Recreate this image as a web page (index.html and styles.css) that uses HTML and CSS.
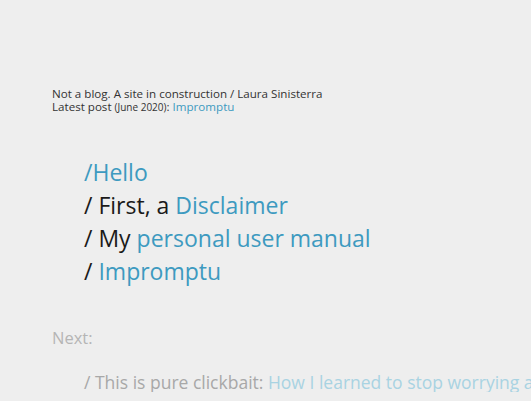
FILE: index.html
```html
<!DOCTYPE html>
<html>
<head>
<meta charset="utf-8">
<link rel="stylesheet" href="styles.css">
</head>
<body>
<main class="page">
  <header class="intro">
    <p class="line">Not a blog. A site in construction / Laura Sinisterra</p>
    <p class="line">Latest post <span class="date">(June 2020)</span>: <a class="link" href="#">Impromptu</a></p>
  </header>
  <nav class="toc">
    <p class="item"><a class="link" href="#">/Hello</a></p>
    <p class="item">/ First, a <a class="link" href="#">Disclaimer</a></p>
    <p class="item">/ My <a class="link" href="#">personal user manual</a></p>
    <p class="item">/ <a class="link" href="#">Impromptu</a></p>
  </nav>
  <section class="next">
    <p class="next-label">Next:</p>
    <p class="next-item">/ This is pure clickbait: <a class="link faded" href="#">How I learned to stop worrying a</a></p>
  </section>
</main>
</body>
</html>
```
FILE: styles.css
```css
html, body {
  margin: 0;
  padding: 0;
  background: #eeeeee;
  overflow: hidden;
}
body {
  font-family: "Open Sans", "Noto Sans", sans-serif;
  color: #333;
}
.page {
  padding: 87px 0 0 52px;
  white-space: nowrap;
}
.intro {
  display: flex;
  flex-direction: column;
}
.line {
  margin: 0;
  font-size: 11.6px;
  line-height: 13px;
  color: #333;
}
.date {
  font-size: 10px;
}
.link {
  color: #3d9ac0;
  text-decoration: none;
}
.toc {
  margin-top: 42px;
  padding-left: 32px;
}
.item {
  margin: 0;
  font-size: 23px;
  line-height: 33px;
  color: #1a1a1a;
}
.next {
  margin-top: 40px;
}
.next-label {
  margin: 0;
  font-size: 16.5px;
  line-height: 20px;
  color: #b5b5b5;
}
.next-item {
  margin: 24px 0 0 32px;
  font-size: 17.5px;
  line-height: 20px;
  color: #a8a8a8;
}
.faded {
  color: #a9d3e2;
}
```
